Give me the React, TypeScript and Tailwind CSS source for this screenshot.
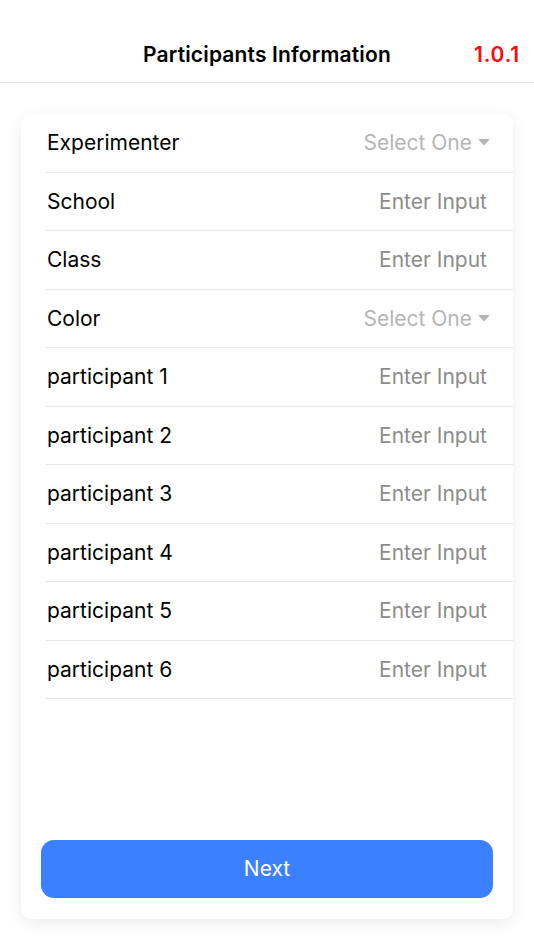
const rows: { label: string; type: 'select' | 'input' }[] = [
  { label: 'Experimenter', type: 'select' },
  { label: 'School', type: 'input' },
  { label: 'Class', type: 'input' },
  { label: 'Color', type: 'select' },
  { label: 'participant 1', type: 'input' },
  { label: 'participant 2', type: 'input' },
  { label: 'participant 3', type: 'input' },
  { label: 'participant 4', type: 'input' },
  { label: 'participant 5', type: 'input' },
  { label: 'participant 6', type: 'input' },
];

export default function App() {
  return (
    <div className="w-[534px] h-[950px] bg-white font-['Inter',sans-serif] text-black">
      <div className="pt-[27px] border-b border-[#e3e3e3]">
        <div className="relative h-[55px] flex items-center justify-center">
          <span className="text-[21px] font-semibold tracking-[0.15px]">Participants Information</span>
          <span className="absolute right-[14px] text-[21px] font-semibold tracking-[0.8px] text-[#ff0a0a]">1.0.1</span>
        </div>
      </div>

      <div className="mx-[21px] mt-[31px] h-[805px] bg-white rounded-[10px] shadow-[0_4px_16px_rgba(0,0,0,0.08)] flex flex-col">
        <div className="flex flex-col">
          {rows.map((r) => (
            <div key={r.label} className="ml-[25px] h-[58.5px] border-b border-[#e6e6e6] flex items-center justify-between">
              <span className="pl-px text-[21px]">{r.label}</span>
              {r.type === 'select' ? (
                <span className="pr-[23px] flex items-center gap-[6px] text-[21px] text-[#b5b5b5]">
                  Select One
                  <svg width="12" height="7" viewBox="0 0 12 7">
                    <path d="M0 0h12L6 6.5z" fill="#b5b5b5" />
                  </svg>
                </span>
              ) : (
                <span className="pr-[26px] text-[21px] text-[#8c8c8c]">Enter Input</span>
              )}
            </div>
          ))}
        </div>
        <div className="mt-auto px-[20px] pb-[21px]">
          <button className="w-full h-[58px] rounded-[13px] bg-[#3a80ff] text-white text-[21px] font-normal">
            Next
          </button>
        </div>
      </div>
    </div>
  );
}
